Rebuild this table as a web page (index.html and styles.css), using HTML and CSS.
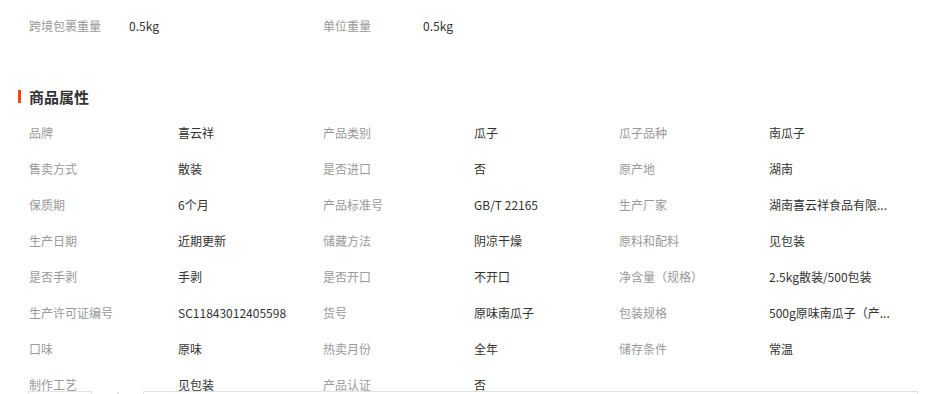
FILE: index.html
```html
<!DOCTYPE html>
<html lang="zh-CN">
<head>
<meta charset="utf-8">
<title>商品属性</title>
<link rel="stylesheet" href="styles.css">
</head>
<body>
<div class="page">
  <div class="top">
    <div class="tpair"><span class="tlabel">跨境包裹重量</span><span class="tvalue">0.5kg</span></div>
    <div class="tpair"><span class="tlabel">单位重量</span><span class="tvalue">0.5kg</span></div>
  </div>
  <h2 class="heading"><span class="bar"></span>商品属性</h2>
  <div class="grid">
    <span class="label">品牌</span><span class="value">喜云祥</span>
    <span class="label">产品类别</span><span class="value">瓜子</span>
    <span class="label">瓜子品种</span><span class="value">南瓜子</span>

    <span class="label">售卖方式</span><span class="value">散装</span>
    <span class="label">是否进口</span><span class="value">否</span>
    <span class="label">原产地</span><span class="value">湖南</span>

    <span class="label">保质期</span><span class="value">6个月</span>
    <span class="label">产品标准号</span><span class="value">GB/T 22165</span>
    <span class="label">生产厂家</span><span class="value">湖南喜云祥食品有限...</span>

    <span class="label">生产日期</span><span class="value">近期更新</span>
    <span class="label">储藏方法</span><span class="value">阴凉干燥</span>
    <span class="label">原料和配料</span><span class="value">见包装</span>

    <span class="label">是否手剥</span><span class="value">手剥</span>
    <span class="label">是否开口</span><span class="value">不开口</span>
    <span class="label">净含量（规格）</span><span class="value">2.5kg散装/500包装</span>

    <span class="label">生产许可证编号</span><span class="value">SC11843012405598</span>
    <span class="label">货号</span><span class="value">原味南瓜子</span>
    <span class="label">包装规格</span><span class="value">500g原味南瓜子（产...</span>

    <span class="label">口味</span><span class="value">原味</span>
    <span class="label">热卖月份</span><span class="value">全年</span>
    <span class="label">储存条件</span><span class="value">常温</span>

    <span class="label">制作工艺</span><span class="value">见包装</span>
    <span class="label">产品认证</span><span class="value">否</span>
  </div>
  <div class="below">
    <span class="box small"></span>
    <span class="tick"></span>
    <span class="box wide"></span>
  </div>
</div>
</body>
</html>
```
FILE: styles.css
```css
html, body {
  margin: 0;
  padding: 0;
  background: #fff;
}
body {
  font-family: "Noto Sans CJK SC", "Noto Sans", sans-serif;
  font-size: 12px;
  color: #333;
}
.page {
  padding-left: 29px;
}
.top {
  display: flex;
  margin-top: 8px;
  height: 36px;
  line-height: 36px;
}
.tpair {
  display: flex;
  width: 294px;
}
.tlabel {
  width: 100px;
  color: #999;
}
.tvalue {
  color: #333;
}
.heading {
  display: flex;
  align-items: center;
  margin: 42px 0 9px -11px;
  height: 20px;
  font-size: 15px;
  font-weight: bold;
  color: #333;
}
.bar {
  width: 3px;
  height: 13px;
  background: #ff4400;
  margin-right: 8px;
}
.grid {
  display: grid;
  grid-template-columns: 149px 145px 151px 145px 150px 140px;
  grid-auto-rows: 36px;
  line-height: 36px;
}
.label {
  color: #999;
  white-space: nowrap;
}
.value {
  color: #333;
  white-space: nowrap;
}
.below {
  display: flex;
  align-items: flex-start;
  margin-top: -12px;
  margin-left: -1px;
}
.box {
  height: 20px;
  border: 1px solid #e3e3e3;
  border-bottom: none;
}
.small {
  width: 62px;
}
.tick {
  width: 2px;
  height: 2px;
  background: #e3e3e3;
  margin-left: 25px;
  margin-top: 1px;
}
.wide {
  width: 773px;
  margin-left: 24px;
}
```
